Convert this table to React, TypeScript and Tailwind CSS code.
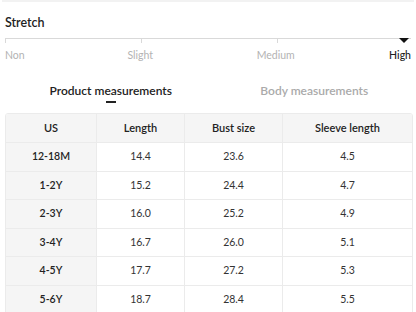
import clsx from 'clsx'

type Row = {
  size: string
  length: string
  bust: string
  sleeve: string
}

const rows: Row[] = [
  { size: '12-18M', length: '14.4', bust: '23.6', sleeve: '4.5' },
  { size: '1-2Y', length: '15.2', bust: '24.4', sleeve: '4.7' },
  { size: '2-3Y', length: '16.0', bust: '25.2', sleeve: '4.9' },
  { size: '3-4Y', length: '16.7', bust: '26.0', sleeve: '5.1' },
  { size: '4-5Y', length: '17.7', bust: '27.2', sleeve: '5.3' },
  { size: '5-6Y', length: '18.7', bust: '28.4', sleeve: '5.5' },
]

const cols = ['w-[90px]', 'w-[88px]', 'w-[98px]', 'flex-1']

const Stretch = () => {
  const labels = ['Non', 'Slight', 'Medium', 'High']
  return (
    <div className="px-[5px] pt-[12px]">
      <div className="text-[12.5px] font-semibold leading-[18px] text-[#222]">Stretch</div>
      <div className="relative mt-[6px] h-[5px] border-t border-[#d9d9d9]">
        <div className="absolute left-0 top-0 h-[4px] w-px bg-[#d9d9d9]" />
        <div className="absolute left-[136px] top-0 h-[4px] w-px bg-[#d9d9d9]" />
        <div className="absolute left-[272px] top-0 h-[4px] w-px bg-[#d9d9d9]" />
        <div className="absolute right-[2px] top-[-1px] h-0 w-0 border-x-[5px] border-t-[5px] border-x-transparent border-t-[#111]" />
      </div>
      <div className="mt-[4px] flex justify-between text-[10.5px] leading-[16px]">
        {labels.map((l, i) => (
          <div
            key={l}
            className={clsx('flex w-0 whitespace-nowrap', {
              'justify-start text-[#b3b3b3]': i === 0,
              'justify-center text-[#b3b3b3]': i === 1 || i === 2,
              'justify-end font-medium text-[#222]': i === 3,
            })}
          >
            {l}
          </div>
        ))}
      </div>
    </div>
  )
}

const App = () => {
  return (
    <div className="h-[312px] w-[416px] overflow-hidden bg-white font-['Lato','Noto_Sans',sans-serif]">
      <div className="mx-[2px] h-[2px] bg-[#f2f2f2]" />
      <Stretch />
      <div className="mt-[19px] flex h-[31px] pl-[9px]">
        <div className="flex w-1/2 flex-col items-center">
          <span className="text-[12px] font-semibold leading-[18px] text-[#222]">
            Product measurements
          </span>
          <div className="mt-px h-[2px] w-[10px] bg-[#222]" />
        </div>
        <div className="flex w-1/2 flex-col items-center">
          <span className="text-[12px] font-semibold leading-[18px] text-[#aaa]">
            Body measurements
          </span>
        </div>
      </div>
      <div className="mx-[5px] w-[408px] overflow-hidden rounded-t-[3px] border border-[#ebebeb] text-[10.5px] text-[#333]">
        <div className="flex h-[28px] bg-[#f5f5f5] text-[11px] font-semibold text-[#222]">
          {['US', 'Length', 'Bust size', 'Sleeve length'].map((h, i) => (
            <div
              key={h}
              className={clsx(cols[i], 'flex items-center justify-center', {
                'border-l border-[#ebebeb]': i > 0,
              })}
            >
              {h}
            </div>
          ))}
        </div>
        {rows.map((r) => (
          <div key={r.size} className="flex h-[28.6px] border-t border-[#ebebeb]">
            <div className={clsx(cols[0], 'flex items-center justify-center bg-[#f5f5f5] font-semibold text-[#222]')}>
              {r.size}
            </div>
            {[r.length, r.bust, r.sleeve].map((v, i) => (
              <div
                key={i}
                className={clsx(cols[i + 1], 'flex items-center justify-center border-l border-[#ebebeb]')}
              >
                {v}
              </div>
            ))}
          </div>
        ))}
      </div>
    </div>
  )
}

export default App
